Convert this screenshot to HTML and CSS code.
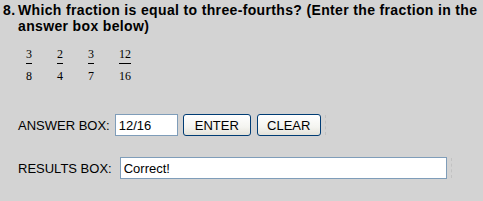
FILE: index.html
```html
<!DOCTYPE html>
<html lang="en">
<head>
    <meta charset="UTF-8">
    <title>Question 8</title>
    <link rel="stylesheet" href="styles.css">
</head>
<body>
    <div class="question">
        <div class="question-title">
            <span class="question-num">8.</span>
            <span class="question-text">Which fraction is equal to three-fourths? (Enter the fraction in the answer box below)</span>
        </div>

        <div class="fractions">
            <div class="fraction"><span>3</span><span class="denom">8</span></div>
            <div class="fraction"><span>2</span><span class="denom">4</span></div>
            <div class="fraction"><span>3</span><span class="denom">7</span></div>
            <div class="fraction"><span>12</span><span class="denom">16</span></div>
        </div>

        <div class="form-row answer-row">
            <label for="answer">ANSWER BOX:</label>
            <input type="text" id="answer" class="answer-input" value="12/16">
            <button class="xp-btn enter-btn">ENTER</button>
            <button class="xp-btn clear-btn">CLEAR</button>
            <span class="focus-mark"></span>
        </div>

        <div class="form-row results-row">
            <label for="results">RESULTS BOX:</label>
            <input type="text" id="results" class="results-input" value="Correct!">
            <span class="focus-mark"></span>
        </div>
    </div>
</body>
</html>
```

FILE: styles.css
```css
body {
    margin: 0;
    background: #d3d3d3;
    font-family: "Liberation Sans", Arial, sans-serif;
    color: #000;
}

.question {
    padding: 2px 0 0 3px;
}

.question-title {
    display: flex;
    font-size: 14px;
    font-weight: bold;
    line-height: 16px;
    letter-spacing: 0.35px;
}

.question-num {
    flex: 0 0 15px;
}

.question-text {
    width: 465px;
}

.fractions {
    display: flex;
    margin: 14px 0 0 23px;
    font-family: "Liberation Serif", "Times New Roman", serif;
    font-size: 12px;
}

.fraction {
    display: flex;
    flex-direction: column;
    align-items: flex-start;
    width: 31px;
    line-height: 12px;
}

.fraction .denom {
    border-top: 1px solid #000;
    margin-top: 3px;
    padding-top: 6px;
}

.form-row {
    display: flex;
    align-items: center;
    margin-left: 15px;
    font-size: 13px;
}

.form-row label {
    margin-right: 5px;
}

.answer-row {
    margin-top: 32px;
}

.results-row {
    margin-top: 21px;
}

.results-row label {
    margin-right: 8px;
}

input {
    font-family: "Liberation Sans", Arial, sans-serif;
    font-size: 13px;
    border: 1px solid #7f9db9;
    background: #fff;
    height: 22px;
    box-sizing: border-box;
    padding: 1px 3px;
    margin: 0;
}

.answer-input {
    width: 63px;
}

.results-input {
    width: 327px;
}

.xp-btn {
    font-family: "Liberation Sans", Arial, sans-serif;
    font-size: 13px;
    height: 22px;
    box-sizing: border-box;
    border: 1px solid #003c74;
    border-radius: 3px;
    background: linear-gradient(#ffffff, #f4f4f0 60%, #e3e2da);
    padding: 0 8px;
    margin-left: 5px;
    color: #000;
}

.enter-btn {
    width: 68px;
}

.clear-btn {
    width: 64px;
    margin-left: 6px;
}

.focus-mark {
    height: 20px;
    margin-left: 4px;
    border-left: 1px dashed #c2c2c2;
}
```
